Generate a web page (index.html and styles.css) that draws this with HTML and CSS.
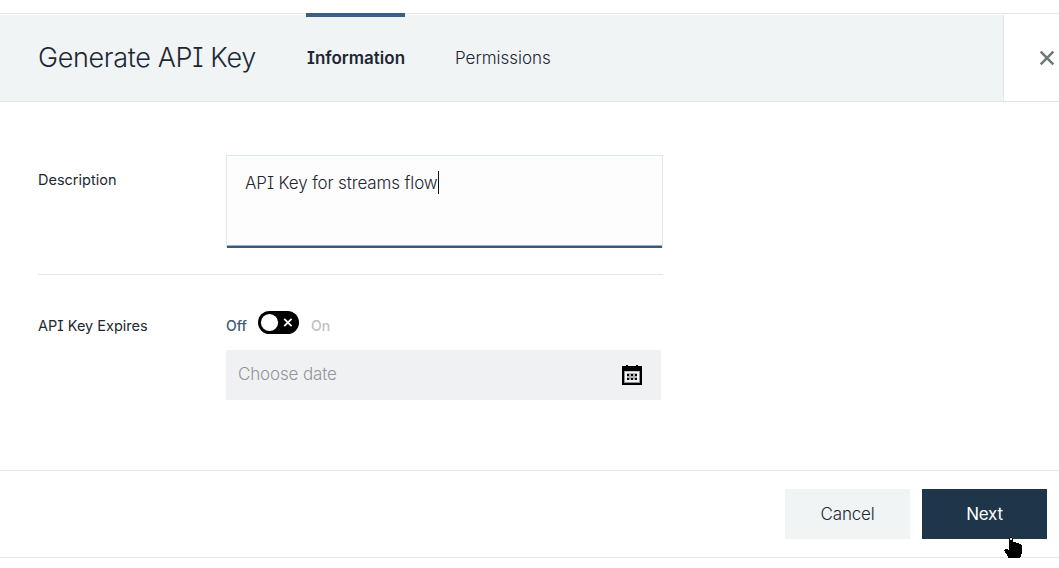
FILE: index.html
```html
<!DOCTYPE html>
<html lang="en">
<head>
<meta charset="utf-8">
<title>Generate API Key</title>
<link rel="stylesheet" href="styles.css">
</head>
<body>
<div class="dialog">
  <header class="header">
    <div class="header-main">
      <h1 class="title">Generate API Key</h1>
      <nav class="tabs">
        <a class="tab tab-active">Information</a>
        <a class="tab">Permissions</a>
      </nav>
    </div>
    <button class="close" aria-label="Close">
      <svg width="16" height="16" viewBox="0 0 16 16"><path d="M1.7 1.7 14.3 14.3M14.3 1.7 1.7 14.3" stroke="#6f7878" stroke-width="2.5" fill="none"/></svg>
    </button>
  </header>
  <main class="body">
    <section class="row row-description">
      <label class="label">Description</label>
      <div class="textarea"><span class="value">API Key for streams flow</span><span class="caret"></span></div>
    </section>
    <section class="row row-expires">
      <label class="label label-expires">API Key Expires</label>
      <div class="field">
        <div class="toggle-line">
          <span class="off">Off</span>
          <svg class="toggle" width="41" height="23" viewBox="0 0 41 23"><rect width="41" height="23" rx="11.5" fill="#000"/><circle cx="11.5" cy="11.5" r="8.6" fill="#fff"/><path d="M26.2 7.8l7.4 7.4M33.6 7.8l-7.4 7.4" stroke="#fff" stroke-width="1.8"/></svg>
          <span class="on">On</span>
        </div>
        <div class="date">
          <span class="placeholder">Choose date</span>
          <svg width="20" height="20" viewBox="0 0 20 20"><path d="M0 1h4V0h2v1h8V0h2v1h4v19H0z" fill="#000"/><path d="M2 6h16v12H2z" fill="#8d8f90"/><path d="M3 6.5h14v10.500H3z" fill="#f4f5f6"/><path d="M5 8h10v7H5z" fill="#aeb0b1"/><path d="M5 9h2v2H5zM9 9h2v2H9zM13 9h2v2h-2zM5 13h2v2H5zM9 13h2v2H9zM13 13h2v2h-2z" fill="#000"/></svg>
        </div>
      </div>
    </section>
  </main>
  <footer class="footer">
    <button class="btn cancel"><span>Cancel</span></button>
    <button class="btn next"><span>Next</span>
      <svg class="pointer" width="19" height="24" viewBox="0 0 19 24"><path d="M5 1h1V0h2v1h1v4h3v1h3v1h2v1h1v9h-1v3h-1v2h-2v1h-1v1H7v-1H6v-1H5v-1H4v-2H3v-2H2v-1H1v-2H0v-1h1v-1h3v1h1z" fill="#000"/><path d="M6 1h2v2H6z" fill="#f3cdb8"/></svg>
    </button>
  </footer>
</div>
</body>
</html>
```
FILE: styles.css
```css
* { box-sizing: border-box; }
body {
  margin: 0;
  background: #fff;
  color: #1d2733;
  font-family: Inter, "Open Sans", sans-serif;
  font-feature-settings: "cv08" 1;
  font-weight: 300;
}
button { font: inherit; font-feature-settings: inherit; color: inherit; border: 0; padding: 0; }
svg { display: block; }
.dialog {
  margin-top: 13px;
  height: 545px;
  border-top: 1px solid #dfe9e7;
  border-bottom: 1px solid #dfe9e7;
  display: flex;
  flex-direction: column;
}
.header { display: flex; height: 88px; border-bottom: 1px solid #dfe6e6; }
.header-main {
  width: 1004px;
  margin-top: 1px;
  padding-left: 38px;
  background: #f0f4f5;
  border-right: 1px solid #dfe6e6;
  display: flex;
}
.title { margin: 0; width: 268px; font-size: 27px; font-weight: 300; line-height: 86px; letter-spacing: -0.35px; white-space: nowrap; }
.tabs { display: flex; gap: 50px; margin-top: -2px; }
.tab { font-size: 17px; line-height: 82px; border-top: 4px solid transparent; white-space: nowrap; height: 88px; width: 99px; }
.tab-active { font-weight: 600; border-top-color: #3a5f85; text-indent: 1px; }
.close { flex: 1; background: #fff; display: flex; align-items: center; justify-content: flex-end; padding-right: 4px; }
.body { height: 368px; padding: 53px 0 0 38px; width: 663px; }
.row { display: flex; }
.row-description { height: 120px; border-bottom: 1px solid #dfe9e7; }
.label { width: 188px; font-size: 14.5px; font-weight: 400; line-height: 20px; padding-top: 15px; }
.label-expires { padding-top: 5px; }
.textarea {
  width: 437px;
  height: 93px;
  border: 1px solid #dfe9e7;
  border-bottom: 0;
  background: linear-gradient(to bottom, #fdfdfd 89px, #9aaec0 89px, #9aaec0 90px, #355b80 90px);
  display: flex;
  padding: 15px 0 0 18px;
}
.value { font-size: 17px; line-height: 24px; letter-spacing: -0.12px; white-space: nowrap; }
.caret { width: 1px; height: 23px; background: #111; }
.row-expires { padding-top: 36px; }
.field { width: 435px; }
.toggle-line { display: flex; height: 39px; font-size: 14px; font-weight: 500; line-height: 30px; }
.off { width: 32px; color: #405978; }
.on { margin-left: 12px; color: #c0bfc3; }
.date { height: 50px; background: #f0f1f3; display: flex; justify-content: space-between; align-items: center; padding: 0 19px 0 12px; }
.placeholder { font-size: 17px; line-height: 24px; letter-spacing: -0.15px; color: #929599; margin-top: -3px; }
.footer { flex: 1; border-top: 1px solid #dfe9e7; display: flex; gap: 12px; justify-content: flex-end; padding: 18px 12px 0; }
.btn { position: relative; width: 125px; height: 50px; font-size: 17px; }
.cancel { background: #f0f4f5; letter-spacing: -0.2px; }
.next { background: #1f364a; color: #fff; font-weight: 400; letter-spacing: -0.2px; }
.pointer { position: absolute; left: 82px; top: 48px; }
```
